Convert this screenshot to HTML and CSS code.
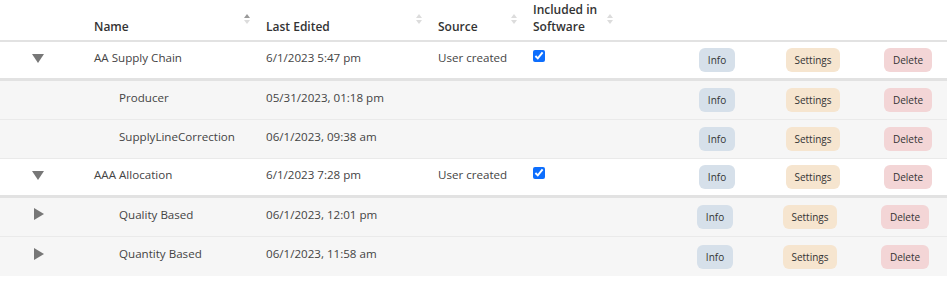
FILE: index.html
```html
<!DOCTYPE html>
<html lang="en">
<head>
    <meta charset="UTF-8">
    <meta name="viewport" content="width=device-width, initial-scale=1.0">
    <title>Models</title>
    <link rel="stylesheet" href="styles.css">
</head>
<body>
    <table class="models">
        <colgroup>
            <col class="col-expand">
            <col class="col-name">
            <col class="col-edited">
            <col class="col-source">
            <col class="col-included">
            <col class="col-info">
            <col class="col-settings">
            <col class="col-delete">
        </colgroup>
        <thead>
            <tr>
                <th></th>
                <th><div class="th-inner"><span>Name</span><span class="sort active"></span></div></th>
                <th><div class="th-inner"><span>Last Edited</span><span class="sort"></span></div></th>
                <th><div class="th-inner"><span>Source</span><span class="sort"></span></div></th>
                <th><div class="th-inner"><span>Included in<br>Software</span><span class="sort"></span></div></th>
                <th></th>
                <th></th>
                <th></th>
            </tr>
        </thead>
        <tbody>
            <tr class="parent open">
                <td class="expand"><span class="caret down"></span></td>
                <td>AA Supply Chain</td>
                <td>6/1/2023 5:47 pm</td>
                <td>User created</td>
                <td><input type="checkbox" checked></td>
                <td class="act-info"><button class="btn info">Info</button></td>
                <td class="act-settings"><button class="btn settings">Settings</button></td>
                <td class="act-delete"><button class="btn delete">Delete</button></td>
            </tr>
            <tr class="child">
                <td class="expand"></td>
                <td class="child-name">Producer</td>
                <td>05/31/2023, 01:18 pm</td>
                <td></td>
                <td></td>
                <td class="act-info"><button class="btn info">Info</button></td>
                <td class="act-settings"><button class="btn settings">Settings</button></td>
                <td class="act-delete"><button class="btn delete">Delete</button></td>
            </tr>
            <tr class="child">
                <td class="expand"></td>
                <td class="child-name">SupplyLineCorrection</td>
                <td>06/1/2023, 09:38 am</td>
                <td></td>
                <td></td>
                <td class="act-info"><button class="btn info">Info</button></td>
                <td class="act-settings"><button class="btn settings">Settings</button></td>
                <td class="act-delete"><button class="btn delete">Delete</button></td>
            </tr>
            <tr class="parent open">
                <td class="expand"><span class="caret down"></span></td>
                <td>AAA Allocation</td>
                <td>6/1/2023 7:28 pm</td>
                <td>User created</td>
                <td><input type="checkbox" checked></td>
                <td class="act-info"><button class="btn info">Info</button></td>
                <td class="act-settings"><button class="btn settings">Settings</button></td>
                <td class="act-delete"><button class="btn delete">Delete</button></td>
            </tr>
            <tr class="child nested">
                <td class="expand"><span class="caret right"></span></td>
                <td class="child-name">Quality Based</td>
                <td>06/1/2023, 12:01 pm</td>
                <td></td>
                <td></td>
                <td class="act-info"><button class="btn info">Info</button></td>
                <td class="act-settings"><button class="btn settings">Settings</button></td>
                <td class="act-delete"><button class="btn delete">Delete</button></td>
            </tr>
            <tr class="child nested last">
                <td class="expand"><span class="caret right"></span></td>
                <td class="child-name">Quantity Based</td>
                <td>06/1/2023, 11:58 am</td>
                <td></td>
                <td></td>
                <td class="act-info"><button class="btn info">Info</button></td>
                <td class="act-settings"><button class="btn settings">Settings</button></td>
                <td class="act-delete"><button class="btn delete">Delete</button></td>
            </tr>
        </tbody>
    </table>
</body>
</html>
```

FILE: styles.css
```css
:root {
    --text: #444;
    --text-head: #333;
    --row-child: #f6f6f6;
    --line: #eaeaea;
    --line-strong: #e2e2e2;
    --info-bg: #d6e0ea;
    --settings-bg: #f6e5cf;
    --delete-bg: #f3d5d6;
}

* {
    margin: 0;
    padding: 0;
    box-sizing: border-box;
}

body {
    font-family: 'Open Sans', 'Noto Sans', sans-serif;
    font-size: 11.6px;
    color: var(--text);
    background: #fff;
}

.models {
    width: 947px;
    table-layout: fixed;
    border-collapse: separate;
    border-spacing: 0;
}

.col-expand { width: 80px; }
.col-name { width: 172px; }
.col-edited { width: 172px; }
.col-source { width: 95px; }
.col-included { width: 96px; }
.col-info { width: 145px; }
.col-settings { width: 100px; }
.col-delete { width: 87px; }

th {
    height: 42px;
    padding: 0 2px 5px 14px;
    border-bottom: 2px solid var(--line-strong);
    vertical-align: bottom;
    text-align: left;
    font-size: 12px;
    font-weight: 600;
    color: var(--text-head);
    line-height: 17px;
}

.th-inner {
    display: flex;
    justify-content: space-between;
    align-items: flex-end;
}

.sort {
    display: flex;
    flex-direction: column;
    gap: 2px;
    margin-bottom: 11px;
}

.sort::before,
.sort::after {
    content: '';
    width: 0;
    height: 0;
    border-left: 3px solid transparent;
    border-right: 3px solid transparent;
}

.sort::before {
    border-bottom: 4px solid #dcdcdc;
}

.sort::after {
    border-top: 4px solid #dcdcdc;
}

.sort.active::before {
    border-bottom-color: #9a9a9a;
}

td {
    height: 39px;
    padding: 0 14px 6px;
    border-bottom: 1px solid var(--line);
    vertical-align: middle;
    white-space: nowrap;
}

.open td {
    border-bottom: 3px solid var(--line-strong);
}

.last td {
    border-bottom: none;
}

.child {
    background: var(--row-child);
}

.child-name {
    padding-left: 39px;
}

td.expand {
    padding: 0 0 6px 32px;
}

.caret {
    display: block;
    width: 0;
    height: 0;
}

.caret.down {
    border-left: 6px solid transparent;
    border-right: 6px solid transparent;
    border-top: 9px solid #777;
    margin-top: 2px;
}

.caret.right {
    border-top: 6px solid transparent;
    border-bottom: 6px solid transparent;
    border-left: 10px solid #777;
    margin-left: 2px;
}

input[type="checkbox"] {
    display: block;
    width: 12px;
    height: 12px;
    margin: 0 0 2px 0;
    accent-color: #0d6efd;
}

.act-info,
.act-settings,
.act-delete {
    text-align: right;
}

td.act-info,
td.act-settings,
td.act-delete {
    padding-bottom: 0;
}

td.act-info { padding-right: 25px; }
td.act-settings { padding-right: 20px; }
td.act-delete { padding-right: 15px; }

.nested td.act-info { padding-right: 27px; }
.nested td.act-settings { padding-right: 23px; }
.nested td.act-delete { padding-right: 18px; }

.btn {
    height: 24px;
    padding: 0 8px;
    border: none;
    border-radius: 6px;
    font-family: 'Open Sans', 'Noto Sans', sans-serif;
    font-size: 10px;
    color: #333;
    cursor: pointer;
}

.btn.info {
    background: var(--info-bg);
    width: 36px;
}

.btn.settings {
    background: var(--settings-bg);
    width: 54px;
}

.btn.delete {
    background: var(--delete-bg);
    width: 48px;
}
```
